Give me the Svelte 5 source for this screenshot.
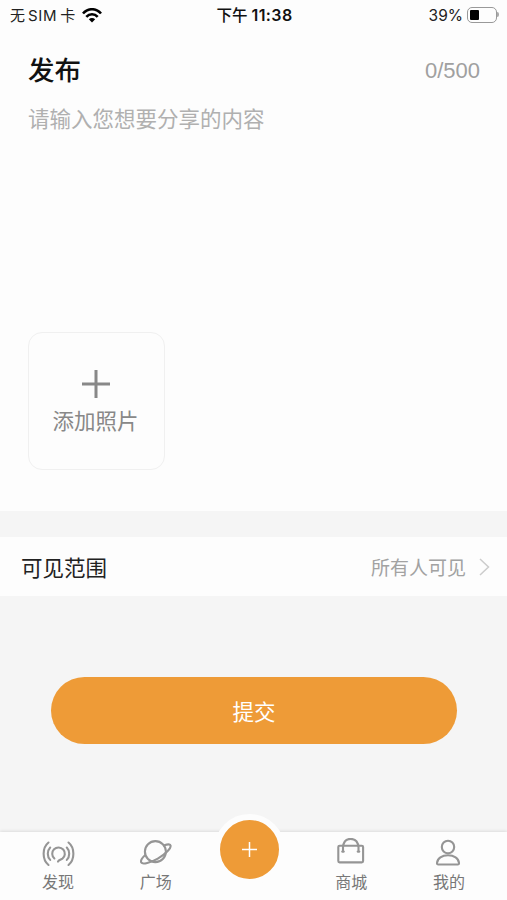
<script lang="ts">
  type Tab = { id: string; label: string }

  const leftTabs: Tab[] = [
    { id: 'discover', label: '发现' },
    { id: 'square', label: '广场' }
  ]
  const rightTabs: Tab[] = [
    { id: 'mall', label: '商城' },
    { id: 'mine', label: '我的' }
  ]
  const maxLength = 500
  const battery = 39

  let content = $state('')
</script>

{#snippet tabItem(tab: Tab)}
  <button class="tab">
    <svg class="tab-icon" width="34" height="30" viewBox="0 0 34 30">
      {#if tab.id === 'discover'}
        <path d="M7.500 4.500C1 9.800 1 21.500 7.500 27M27.500 4.500c6.500 5.300 6.500 17 0 22.500" />
        <path d="M9.200 9.500c-3.200 3.400-3.200 9 0 12.400M25.800 9.500c3.200 3.400 3.200 9 0 12.400" />
        <path d="M13.400 20.500A6.300 6.300 0 1 1 21.400 20.700C19.800 21.800 18.200 21.500 17 23.600" />
      {:else if tab.id === 'square'}
        <circle cx="16.400" cy="13.600" r="10.500" />
        <path d="M25.400 7.300c3.600-1.300 6-1.200 6.200.4C31.900 10.500 26.500 16.300 18.800 20.600 11.500 24.700 3.500 26.800 2.300 24.600c-.8-1.600.6-4.600 3.700-7.400" />
      {:else if tab.id === 'mall'}
        <rect x="4.300" y="7.800" width="24.800" height="16.600" rx="1.300" />
        <path d="M9 13.600V9.200C9.500 3.500 12.500.9 16.500.9s7.500 2.600 8 8.300v4.400M8.200 13.600h1.600M23.700 13.600h1.600" />
      {:else}
        <circle cx="16" cy="9" r="6.200" />
        <path d="M5 25c.4-4.800 5-7.700 11-7.700s10.600 2.900 11 7.700c.1 1-.4 1.500-1.300 1.500H6.300c-.9 0-1.400-.5-1.300-1.500z" />
      {/if}
    </svg>
    <span>{tab.label}</span>
  </button>
{/snippet}

<div class="page">
  <header class="status">
    <div class="carrier">
      <span>无<span class="sim">SIM</span>卡</span>
      <svg width="20" height="15" viewBox="0 0 20 15">
        <path d="M1 5.500C6-.2 14-.2 19 5.500M4.300 8.800c3.200-3.500 8.200-3.500 11.400 0" />
        <path class="dot" d="M6.800 11.300c1.800-1.700 4.600-1.700 6.400 0L10 14.500z" />
      </svg>
    </div>
    <div class="time">下午<b>11:38</b></div>
    <div class="power">
      <span>{battery}%</span>
      <div class="battery"><div class="level" style="width: {battery}%"></div></div>
      <div class="cap"></div>
    </div>
  </header>

  <section class="editor">
    <div class="heading">
      <h1>发布</h1>
      <span class="count">{content.length}/{maxLength}</span>
    </div>
    <textarea bind:value={content} maxlength={maxLength} placeholder="请输入您想要分享的内容"></textarea>
    <button class="add-photo">
      <svg width="28" height="28" viewBox="0 0 28 28">
        <path d="M14 0v28M0 14h28" />
      </svg>
      <span>添加照片</span>
    </button>
  </section>

  <button class="scope">
    <span class="scope-label">可见范围</span>
    <span class="scope-value">所有人可见</span>
    <svg width="11" height="18" viewBox="0 0 11 18">
      <path d="M1 1l8.500 8L1 17" />
    </svg>
  </button>

  <main class="actions">
    <button class="submit">提交</button>
  </main>

  <nav class="tabbar">
    {#each leftTabs as tab (tab.id)}
      {@render tabItem(tab)}
    {/each}
    <div class="publish-slot">
      <button class="publish" aria-label="发布">
        <svg width="15" height="15" viewBox="0 0 15 15">
          <path d="M7.500 0v15M0 7.500h15" />
        </svg>
      </button>
    </div>
    {#each rightTabs as tab (tab.id)}
      {@render tabItem(tab)}
    {/each}
  </nav>
</div>

<style>
  :global(body) {
    margin: 0;
  }

  .page {
    display: flex;
    flex-direction: column;
    height: 900px;
    overflow: hidden;
    background: #f5f5f5;
    font-family: Inter, 'Noto Sans CJK SC', sans-serif;
    color: #222;
  }

  button {
    margin: 0;
    padding: 0;
    border: 0;
    background: none;
    font: inherit;
    color: inherit;
  }

  svg {
    display: block;
    flex: none;
    fill: none;
    stroke: currentColor;
  }

  .status {
    display: grid;
    grid-template-columns: 1fr auto 1fr;
    align-items: center;
    height: 30px;
    padding: 0 8px 0 10px;
    box-sizing: border-box;
    background: #fdfdfd;
    font-size: 15.500px;
    line-height: 30px;
    white-space: nowrap;
  }

  .carrier {
    display: flex;
    align-items: center;
    gap: 7px;
    font-size: 15px;
  }

  .sim {
    margin: 0 3px;
    letter-spacing: 0.7px;
  }

  .carrier svg {
    margin-bottom: 1px;
    color: #000;
    stroke-width: 2.600;
  }

  .carrier .dot {
    fill: #000;
    stroke: none;
  }

  .time {
    font-weight: 500;
    color: #111;
  }

  .time b {
    margin-left: 4px;
    font-size: 16px;
    font-weight: 600;
    letter-spacing: 0.4px;
  }

  .power {
    display: flex;
    align-items: center;
    justify-content: flex-end;
  }

  .battery {
    width: 30px;
    height: 16px;
    margin: 0 0 2px 4px;
    padding: 2px;
    box-sizing: border-box;
    border: 1px solid #999;
    border-radius: 5px;
  }

  .level {
    height: 10px;
    border-radius: 1px;
    background: #000;
  }

  .cap {
    width: 2px;
    height: 5px;
    margin-bottom: 2px;
    border-radius: 0 2px 2px 0;
    background: #aaa;
  }

  .editor {
    display: flex;
    flex-direction: column;
    height: 481px;
    padding: 20px 27px 0 28px;
    box-sizing: border-box;
    background: #fdfdfd;
  }

  .heading {
    display: flex;
    align-items: center;
    justify-content: space-between;
    height: 40px;
  }

  h1 {
    margin: 0;
    font-size: 26.500px;
    font-weight: 500;
    line-height: 40px;
    color: #111;
  }

  .count {
    padding-top: 1px;
    font-family: 'Liberation Sans', sans-serif;
    font-size: 22px;
    color: #a0a0a0;
  }

  textarea {
    height: 229px;
    margin: 13px 0 0;
    padding: 0;
    border: 0;
    outline: 0;
    resize: none;
    background: none;
    font-family: inherit;
    font-size: 21.500px;
    line-height: 32px;
    color: #222;
  }

  textarea::placeholder {
    color: #b0b0b0;
    opacity: 1;
  }

  .add-photo {
    display: flex;
    flex-direction: column;
    align-items: center;
    width: 137px;
    height: 138px;
    padding: 37px 2px 0 0;
    box-sizing: border-box;
    border: 1px solid #f0f0f0;
    border-radius: 14px;
    font-size: 21.500px;
    line-height: 30px;
    color: #888;
  }

  .add-photo svg {
    margin-bottom: 8px;
    stroke-width: 3;
  }

  .scope {
    display: flex;
    align-items: center;
    height: 59px;
    margin-top: 26px;
    padding: 0 17px 0 21px;
    background: #fdfdfd;
    text-align: left;
  }

  .scope-label {
    flex: 1;
    padding-bottom: 1px;
    font-size: 21.500px;
  }

  .scope-value {
    font-size: 19px;
    color: #a2a2a2;
  }

  .scope svg {
    margin-left: 13px;
    color: #ccc;
    stroke-width: 1.500;
  }

  .actions {
    flex: 1;
    padding: 81px 50px 0 51px;
  }

  .submit {
    width: 100%;
    height: 67px;
    border-radius: 34px;
    background: #ee9b37;
    font-size: 21.500px;
    color: #fff;
  }

  .tabbar {
    display: grid;
    grid-template-columns: repeat(5, 1fr);
    height: 68px;
    padding: 0 9px;
    background: #fdfdfd;
    box-shadow: 0 -1px 3px rgba(0, 0, 0, 0.1);
  }

  .tab {
    display: flex;
    flex-direction: column;
    align-items: center;
    padding-top: 6px;
    font-size: 16px;
    line-height: 24px;
    color: #777;
  }

  .tab-icon {
    margin-bottom: 2px;
    color: #959595;
    stroke-width: 2.100;
    stroke-linecap: round;
    stroke-linejoin: round;
  }

  .publish-slot {
    display: flex;
    justify-content: center;
    align-items: flex-start;
    padding-right: 7px;
  }

  .publish {
    display: flex;
    align-items: center;
    justify-content: center;
    flex: none;
    width: 71px;
    height: 71px;
    margin-top: -18px;
    border: 6px solid #fdfdfd;
    border-radius: 50%;
    box-sizing: border-box;
    background: #ee9b37;
    color: #fff;
  }

  .publish svg {
    stroke-width: 1.500;
  }
</style>
